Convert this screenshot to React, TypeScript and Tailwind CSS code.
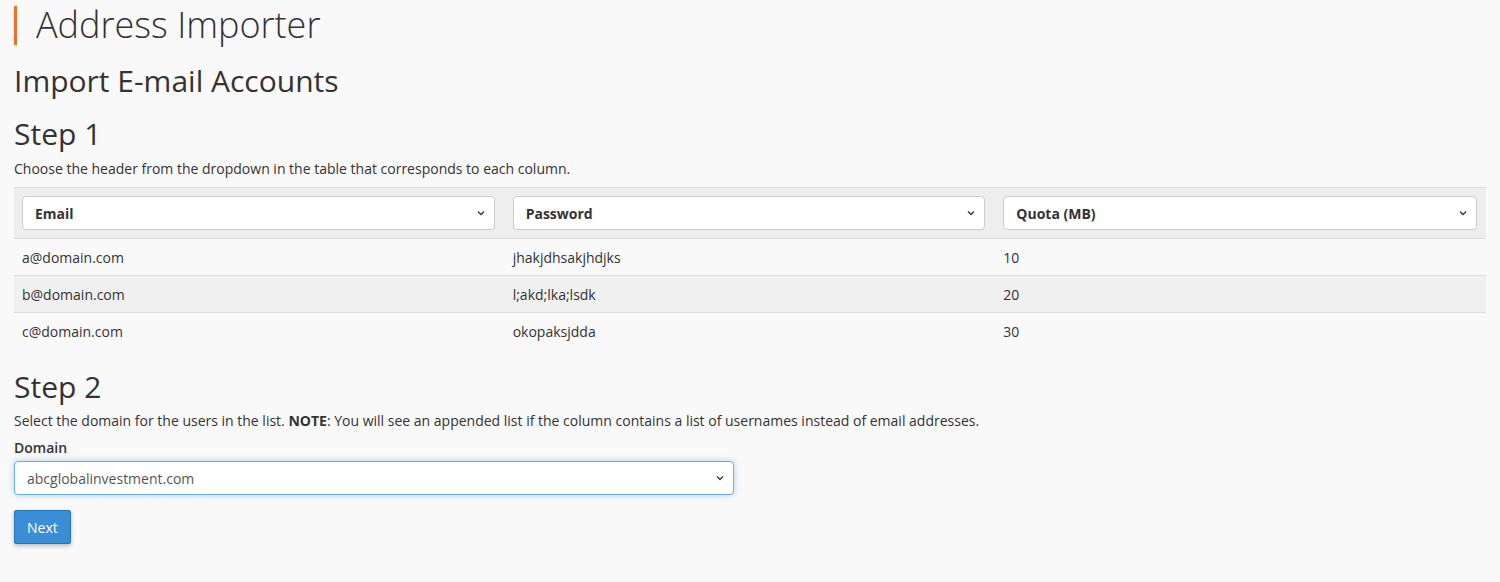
import React from "react";

const Chevron = () => (
  <svg width="10" height="10" viewBox="0 0 10 10" className="absolute right-2 top-1/2 -translate-y-1/2">
    <path d="M2 3.5 L5 6.5 L8 3.5" fill="none" stroke="#333" strokeWidth="1.3" />
  </svg>
);

const Sel = ({ label, bold }: { label: string; bold?: boolean }) => (
  <div className={`relative h-[34px] bg-white border border-[#ccc] rounded-[4px] flex items-center px-3 text-[14px] text-[#333] ${bold ? "font-bold" : ""}`}>
    {label}
    <Chevron />
  </div>
);

export default function App() {
  const rows = [
    ["a@domain.com", "jhakjdhsakjhdjks", "10"],
    ["b@domain.com", "l;akd;lka;lsdk", "20"],
    ["c@domain.com", "okopaksjdda", "30"],
  ];
  return (
    <div className="min-h-[582px] bg-[#f9f9f9] text-[#333] px-[14px] pt-[3px]" style={{ fontFamily: '"Open Sans", sans-serif' }}>
      <div className="flex items-center h-[44px]">
        <div className="w-[3px] h-[39px] bg-[#f26f28] mr-[19px]" />
        <h1 className="text-[36px] font-light leading-none text-[#333]">Address Importer</h1>
      </div>
      <h2 className="text-[30px] leading-none mt-[19px]">Import E-mail Accounts</h2>
      <h3 className="text-[30px] leading-none mt-[23px]">Step 1</h3>
      <p className="text-[14px] mt-[9px]">Choose the header from the dropdown in the table that corresponds to each column.</p>
      <div className="mt-[8px] border-t border-[#ddd]">
        <div className="grid grid-cols-3 bg-[#eeeeee] border-b border-[#ddd]">
          <div className="pl-2 pr-[10px] py-2"><Sel label="Email" bold /></div>
          <div className="pl-2 pr-[10px] py-2"><Sel label="Password" bold /></div>
          <div className="pl-2 pr-[9px] py-2"><Sel label="Quota (MB)" bold /></div>
        </div>
        {rows.map((r, i) => (
          <div key={i} className={`grid grid-cols-3 h-[37px] items-center text-[14px] ${i < 2 ? "border-b border-[#ddd]" : ""} ${i === 1 ? "bg-[#f0f0f0]" : "bg-[#f9f9f9]"}`}>
            {r.map((c, j) => <div key={j} className="px-2">{c}</div>)}
          </div>
        ))}
      </div>
      <h3 className="text-[30px] leading-none mt-[22px]">Step 2</h3>
      <p className="text-[14px] mt-[8px]">Select the domain for the users in the list. <b>NOTE</b>: You will see an appended list if the column contains a list of usernames instead of email addresses.</p>
      <div className="text-[14px] font-semibold mt-[6px]">Domain</div>
      <div className="w-[720px] mt-[3px] relative h-[34px] bg-white border border-[#66afe9] shadow-[0_0_6px_rgba(102,175,233,0.5)] rounded-[4px] flex items-center px-3 text-[14px] text-[#555]">
        abcglobalinvestment.com
        <Chevron />
      </div>
      <button className="block mt-[15px] h-[34px] px-3 bg-[#3b8dd5] border border-[#2a75b8] rounded-[2px] text-white text-[14px] shadow-[0_2px_4px_rgba(0,0,0,0.25)]">Next</button>
    </div>
  );
}
